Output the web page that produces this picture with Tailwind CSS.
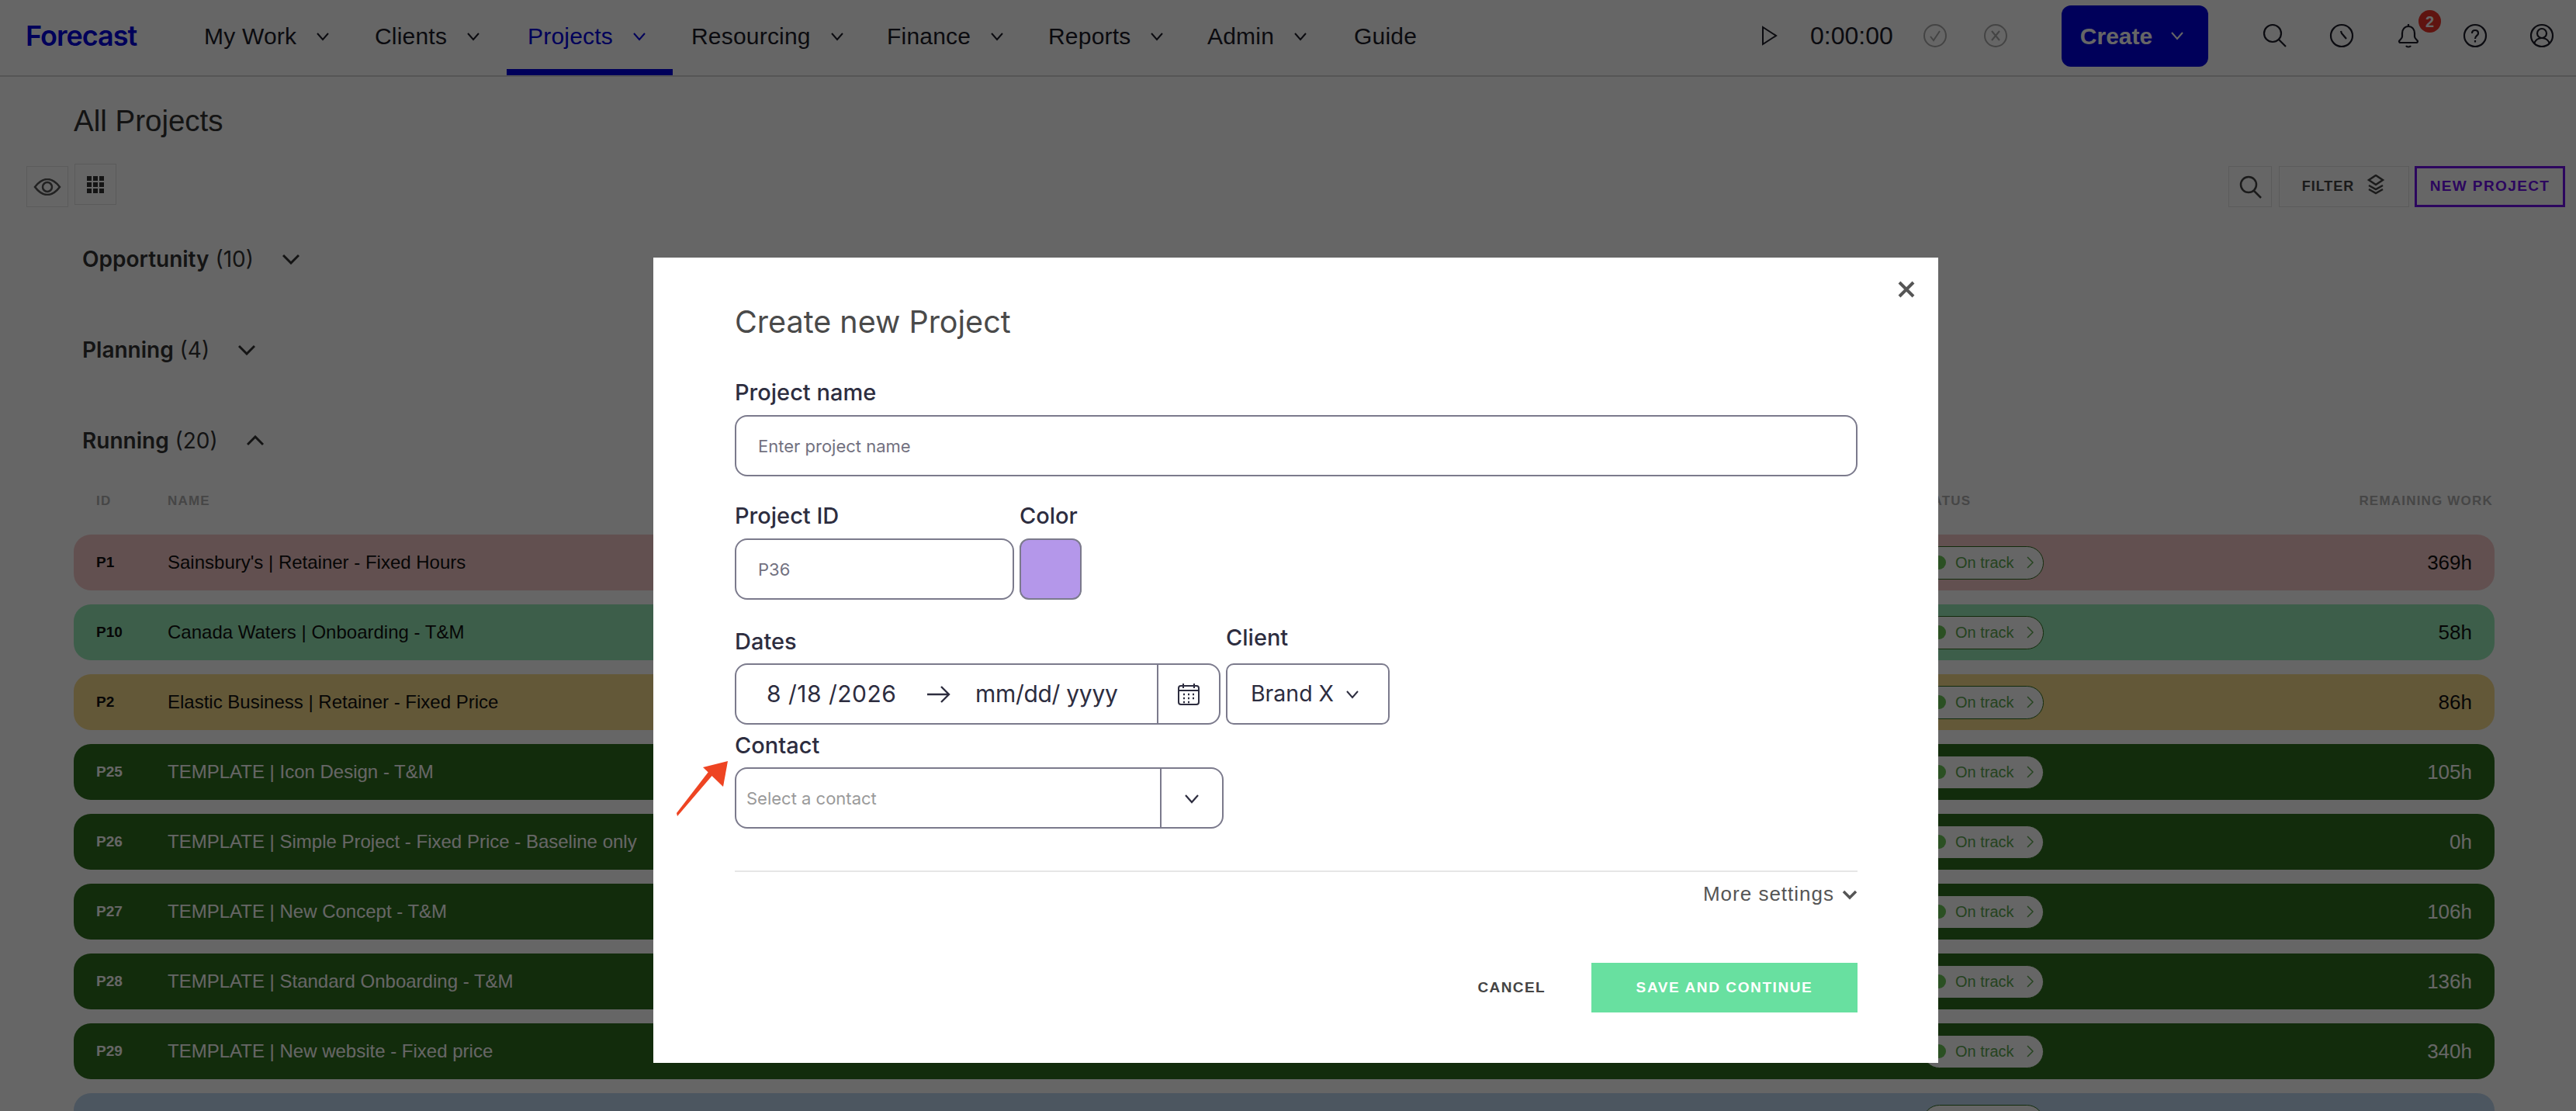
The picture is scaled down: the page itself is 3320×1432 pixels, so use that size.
<!DOCTYPE html>
<html lang="en">
<head>
    <meta charset="UTF-8">
    <title>All Projects</title>
    <script src="https://cdn.jsdelivr.net/npm/@tailwindcss/browser@4"></script>
</head>
<body class="h-[1432px] w-[3320px] overflow-hidden bg-white font-['Liberation_Sans',sans-serif] text-[#111]">
    <!-- page under the dialog -->
    <header class="flex h-[99px] items-center border-b-2 border-[#d8d8d8] pl-[33px] pr-[28px]">
        <span class="mb-[5px] w-[230px] font-['Inter',sans-serif] text-[36px] font-semibold tracking-[-1px] text-[#0000e0]">Forecast</span>
        <nav class="flex h-full items-center text-[30px] tracking-[0.2px] text-[#1c1c28]">
            <a class="flex h-full w-[220px] items-center gap-[24px] pb-[4px]">My Work <svg class="size-[20px]" viewBox="0 0 20 20" fill="none" stroke="currentColor" stroke-width="2"><path d="M3 6l7 8 7-8"/></svg></a>
            <a class="flex h-full w-[197px] items-center gap-[24px] pb-[4px]">Clients <svg class="size-[20px]" viewBox="0 0 20 20" fill="none" stroke="currentColor" stroke-width="2"><path d="M3 6l7 8 7-8"/></svg></a>
            <a class="relative -ml-[27px] flex h-full w-[238px] items-center gap-[24px] pb-[4px] pl-[27px] text-[#0000e0]">Projects <svg class="size-[20px]" viewBox="0 0 20 20" fill="none" stroke="currentColor" stroke-width="2"><path d="M3 6l7 8 7-8"/></svg><span class="absolute bottom-0 left-0 h-[8px] w-[214px] bg-[#0000e0]"></span></a>
            <a class="flex h-full w-[252px] items-center gap-[24px] pb-[4px]">Resourcing <svg class="size-[20px]" viewBox="0 0 20 20" fill="none" stroke="currentColor" stroke-width="2"><path d="M3 6l7 8 7-8"/></svg></a>
            <a class="flex h-full w-[208px] items-center gap-[24px] pb-[4px]">Finance <svg class="size-[20px]" viewBox="0 0 20 20" fill="none" stroke="currentColor" stroke-width="2"><path d="M3 6l7 8 7-8"/></svg></a>
            <a class="flex h-full w-[205px] items-center gap-[24px] pb-[4px]">Reports <svg class="size-[20px]" viewBox="0 0 20 20" fill="none" stroke="currentColor" stroke-width="2"><path d="M3 6l7 8 7-8"/></svg></a>
            <a class="flex h-full w-[189px] items-center gap-[24px] pb-[4px]">Admin <svg class="size-[20px]" viewBox="0 0 20 20" fill="none" stroke="currentColor" stroke-width="2"><path d="M3 6l7 8 7-8"/></svg></a>
            <a class="flex h-full items-center pb-[4px]">Guide</a>
        </nav>
        <div class="mb-[5px] ml-auto flex items-center text-[#1c1c28]">
            <svg class="size-[28px]" viewBox="0 0 28 28" fill="none" stroke="currentColor" stroke-width="2"><path d="M6 3l17 11L6 25z"/></svg>
            <span class="ml-[39px] w-[145px] text-[32px]">0:00:00</span>
            <svg class="size-[32px] text-[#aaa]" viewBox="0 0 32 32" fill="none" stroke="currentColor" stroke-width="2"><circle cx="16" cy="16" r="14"/><path d="M10 17l4 5 8-12"/></svg>
            <svg class="ml-[46px] size-[32px] text-[#aaa]" viewBox="0 0 32 32" fill="none" stroke="currentColor" stroke-width="2"><circle cx="16" cy="16" r="14"/><path d="M11 10l10 12M21 10L11 22"/></svg>
            <button class="ml-[69px] flex h-[79px] w-[189px] items-center justify-center gap-[22px] rounded-[12px] bg-[#0000e0] pr-[6px] text-[30px] font-semibold text-white">Create <svg class="size-[20px]" viewBox="0 0 20 20" fill="none" stroke="currentColor" stroke-width="2"><path d="M3 6l7 8 7-8"/></svg></button>
            <svg class="ml-[70px] size-[32px]" viewBox="0 0 32 32" fill="none" stroke="currentColor" stroke-width="2.2"><circle cx="13" cy="13" r="11"/><path d="M21 21l9 9"/></svg>
            <svg class="ml-[54px] size-[32px]" viewBox="0 0 32 32" fill="none" stroke="currentColor" stroke-width="2.2"><circle cx="16" cy="16" r="14"/><path d="M15 10l1 3 6 7"/></svg>
            <div class="relative ml-[54px] size-[32px]">
                <svg class="size-[32px]" viewBox="0 0 32 32" fill="none" stroke="currentColor" stroke-width="2.2"><path d="M16 1v3M16 4c-5 0-8 4-8 9v4c0 3-3 4-4 6 0 2 1 2 2 2h20c1 0 2 0 2-2-1-2-4-3-4-6v-4c0-5-3-9-8-9zM13 29c1 2 5 2 6 0"/></svg>
                <span class="absolute -top-[17px] left-[29px] flex size-[29px] items-center justify-center rounded-full bg-[#ed3428] text-[20px] font-bold text-white">2</span>
            </div>
            <svg class="ml-[54px] size-[32px]" viewBox="0 0 32 32" fill="none" stroke="currentColor" stroke-width="2.2"><circle cx="16" cy="16" r="14"/><path d="M12 13c0-3 2-4 4-4s4 1 4 4c0 3-4 3-4 7M16 22v2.500"/></svg>
            <svg class="ml-[54px] size-[32px]" viewBox="0 0 32 32" fill="none" stroke="currentColor" stroke-width="2.2"><circle cx="16" cy="16" r="14"/><circle cx="16" cy="13" r="6"/><path d="M6 26c2-5 6-7 10-7s8 2 10 7"/></svg>
        </div>
    </header>

    <main>
        <h1 class="mt-[35px] pl-[95px] text-[38.5px] leading-[44px] text-[#333]">All Projects</h1>
        <div class="mt-[33px] flex items-start px-[34px] pr-[14px]">
            <button class="mt-[3px] flex h-[53px] w-[54px] items-center justify-center border border-[#e4e4e4] text-[#555]">
                <svg class="h-[22px] w-[36px]" viewBox="0 0 36 22" fill="none" stroke="currentColor" stroke-width="2.5"><path d="M2 11C8 3 13 1 18 1s10 2 16 10c-6 8-11 10-16 10S8 19 2 11z"/><ellipse cx="18" cy="11" rx="6" ry="6"/></svg>
            </button>
            <button class="ml-[8px] flex h-[53px] w-[54px] items-center justify-center border border-[#e4e4e4] text-[#333]">
                <svg class="size-[22px]" viewBox="0 0 22 22" fill="currentColor"><path d="M0 0h6v6H0zM8 0h6v6H8zM16 0h6v6h-6zM0 8h6v6H0zM8 8h6v6H8zM16 8h6v6h-6zM0 16h6v6H0zM8 16h6v6H8zM16 16h6v6h-6z"/></svg>
            </button>
            <button class="ml-auto mt-[3px] flex h-[53px] w-[56px] items-center justify-center border border-[#e4e4e4] text-[#444]">
                <svg class="size-[32px]" viewBox="0 0 32 32" fill="none" stroke="currentColor" stroke-width="2.5"><circle cx="14" cy="13" r="10"/><path d="M21 21l9 9"/></svg>
            </button>
            <button class="ml-[9px] mt-[3px] flex h-[53px] w-[168px] items-center justify-center gap-[15px] border border-[#e4e4e4] text-[18px] font-bold tracking-[1px] text-[#444]">FILTER
                <svg class="mb-[6px] size-[26px]" viewBox="0 0 26 26" fill="none" stroke="currentColor" stroke-width="2.5"><path d="M13 1l9 6-9 6-9-6zM4 14l9 5 9-5M4 19l9 5 9-5"/></svg>
            </button>
            <button class="ml-[7px] mt-[3px] h-[53px] w-[194px] border-[3px] border-[#6e0fea] text-[19px] font-bold tracking-[1.4px] text-[#6e0fea]">NEW PROJECT</button>
        </div>

        <section class="pl-[106px] font-['Inter',sans-serif] text-[28px] text-[#333]">
            <div class="mt-[47px] flex h-[40px] items-center gap-[37px]"><span><b class="font-semibold">Opportunity</b> (10)</span><svg class="h-[14px] w-[22px]" viewBox="0 0 22 14" fill="none" stroke="currentColor" stroke-width="3"><path d="M1 2l10 10L21 2"/></svg></div>
            <div class="mt-[77px] flex h-[40px] items-center gap-[37px]"><span><b class="font-semibold">Planning</b> (4)</span><svg class="h-[14px] w-[22px]" viewBox="0 0 22 14" fill="none" stroke="currentColor" stroke-width="3"><path d="M1 2l10 10L21 2"/></svg></div>
            <div class="mt-[77px] flex h-[40px] items-center gap-[37px]"><span><b class="font-semibold">Running</b> (20)</span><svg class="h-[14px] w-[22px]" viewBox="0 0 22 14" fill="none" stroke="currentColor" stroke-width="3"><path d="M1 12L11 2l10 10"/></svg></div>
        </section>

        <div class="mt-[48px] flex h-[20px] items-center pl-[124px] pr-[107px] text-[17px] font-bold tracking-[1.2px] text-[#b0b0b0]">
            <span class="w-[92px]">ID</span><span>NAME</span><span class="ml-auto">STATUS</span><span class="ml-[500px]">REMAINING WORK</span>
        </div>

        <div class="mx-[95px] mt-[33px] flex w-[3120px] flex-col gap-[18px] text-[24px]">
            <div class="flex h-[72px] items-center rounded-[22px] bg-[#f5c8c8] pl-[29px] pr-[29px]"><b class="w-[92px] text-[19px]">P1</b><span class="flex-1">Sainsbury's | Retainer - Fixed Hours</span><span class="flex h-[43px] w-[156px] items-center rounded-full border border-[#2f6e1e] bg-white pl-[11px] text-[20px] text-[#5ea84f]"><i class="mr-[12px] size-[18px] rounded-full bg-[#6cc858]"></i>On track<svg class="ml-auto mr-[12px] h-[16px] w-[10px]" viewBox="0 0 10 16" fill="none" stroke="currentColor" stroke-width="1.5"><path d="M2 1l7 7-7 7"/></svg></span><span class="w-[552px] text-right text-[26px]">369h</span></div>
            <div class="flex h-[72px] items-center rounded-[22px] bg-[#99ebb9] pl-[29px] pr-[29px]"><b class="w-[92px] text-[19px]">P10</b><span class="flex-1">Canada Waters | Onboarding - T&amp;M</span><span class="flex h-[43px] w-[156px] items-center rounded-full border border-[#2f6e1e] bg-white pl-[11px] text-[20px] text-[#5ea84f]"><i class="mr-[12px] size-[18px] rounded-full bg-[#6cc858]"></i>On track<svg class="ml-auto mr-[12px] h-[16px] w-[10px]" viewBox="0 0 10 16" fill="none" stroke="currentColor" stroke-width="1.5"><path d="M2 1l7 7-7 7"/></svg></span><span class="w-[552px] text-right text-[26px]">58h</span></div>
            <div class="flex h-[72px] items-center rounded-[22px] bg-[#f8dc8c] pl-[29px] pr-[29px]"><b class="w-[92px] text-[19px]">P2</b><span class="flex-1">Elastic Business | Retainer - Fixed Price</span><span class="flex h-[43px] w-[156px] items-center rounded-full border border-[#2f6e1e] bg-white pl-[11px] text-[20px] text-[#5ea84f]"><i class="mr-[12px] size-[18px] rounded-full bg-[#6cc858]"></i>On track<svg class="ml-auto mr-[12px] h-[16px] w-[10px]" viewBox="0 0 10 16" fill="none" stroke="currentColor" stroke-width="1.5"><path d="M2 1l7 7-7 7"/></svg></span><span class="w-[552px] text-right text-[26px]">86h</span></div>
            <div class="flex h-[72px] items-center rounded-[22px] bg-[#2f6e1e] pl-[29px] pr-[29px] text-white"><b class="w-[92px] text-[19px]">P25</b><span class="flex-1">TEMPLATE | Icon Design - T&amp;M</span><span class="flex h-[43px] w-[156px] items-center rounded-full border border-[#2f6e1e] bg-white pl-[11px] text-[20px] text-[#5ea84f]"><i class="mr-[12px] size-[18px] rounded-full bg-[#6cc858]"></i>On track<svg class="ml-auto mr-[12px] h-[16px] w-[10px]" viewBox="0 0 10 16" fill="none" stroke="currentColor" stroke-width="1.5"><path d="M2 1l7 7-7 7"/></svg></span><span class="w-[552px] text-right text-[26px]">105h</span></div>
            <div class="flex h-[72px] items-center rounded-[22px] bg-[#2f6e1e] pl-[29px] pr-[29px] text-white"><b class="w-[92px] text-[19px]">P26</b><span class="flex-1">TEMPLATE | Simple Project - Fixed Price - Baseline only</span><span class="flex h-[43px] w-[156px] items-center rounded-full border border-[#2f6e1e] bg-white pl-[11px] text-[20px] text-[#5ea84f]"><i class="mr-[12px] size-[18px] rounded-full bg-[#6cc858]"></i>On track<svg class="ml-auto mr-[12px] h-[16px] w-[10px]" viewBox="0 0 10 16" fill="none" stroke="currentColor" stroke-width="1.5"><path d="M2 1l7 7-7 7"/></svg></span><span class="w-[552px] text-right text-[26px]">0h</span></div>
            <div class="flex h-[72px] items-center rounded-[22px] bg-[#2f6e1e] pl-[29px] pr-[29px] text-white"><b class="w-[92px] text-[19px]">P27</b><span class="flex-1">TEMPLATE | New Concept - T&amp;M</span><span class="flex h-[43px] w-[156px] items-center rounded-full border border-[#2f6e1e] bg-white pl-[11px] text-[20px] text-[#5ea84f]"><i class="mr-[12px] size-[18px] rounded-full bg-[#6cc858]"></i>On track<svg class="ml-auto mr-[12px] h-[16px] w-[10px]" viewBox="0 0 10 16" fill="none" stroke="currentColor" stroke-width="1.5"><path d="M2 1l7 7-7 7"/></svg></span><span class="w-[552px] text-right text-[26px]">106h</span></div>
            <div class="flex h-[72px] items-center rounded-[22px] bg-[#2f6e1e] pl-[29px] pr-[29px] text-white"><b class="w-[92px] text-[19px]">P28</b><span class="flex-1">TEMPLATE | Standard Onboarding - T&amp;M</span><span class="flex h-[43px] w-[156px] items-center rounded-full border border-[#2f6e1e] bg-white pl-[11px] text-[20px] text-[#5ea84f]"><i class="mr-[12px] size-[18px] rounded-full bg-[#6cc858]"></i>On track<svg class="ml-auto mr-[12px] h-[16px] w-[10px]" viewBox="0 0 10 16" fill="none" stroke="currentColor" stroke-width="1.5"><path d="M2 1l7 7-7 7"/></svg></span><span class="w-[552px] text-right text-[26px]">136h</span></div>
            <div class="flex h-[72px] items-center rounded-[22px] bg-[#2f6e1e] pl-[29px] pr-[29px] text-white"><b class="w-[92px] text-[19px]">P29</b><span class="flex-1">TEMPLATE | New website - Fixed price</span><span class="flex h-[43px] w-[156px] items-center rounded-full border border-[#2f6e1e] bg-white pl-[11px] text-[20px] text-[#5ea84f]"><i class="mr-[12px] size-[18px] rounded-full bg-[#6cc858]"></i>On track<svg class="ml-auto mr-[12px] h-[16px] w-[10px]" viewBox="0 0 10 16" fill="none" stroke="currentColor" stroke-width="1.5"><path d="M2 1l7 7-7 7"/></svg></span><span class="w-[552px] text-right text-[26px]">340h</span></div>
            <div class="flex h-[72px] items-center justify-end rounded-[22px] bg-[#bed7f0] pr-[581px]"><span class="h-[43px] w-[156px] rounded-full border border-[#2f6e1e] bg-white"></span></div>
        </div>
    </main>

    <!-- dim layer -->
    <div class="fixed inset-0 bg-black/60"></div>

    <!-- dialog -->
    <div class="fixed left-[842px] top-[332px] h-[1038px] w-[1656px] bg-white pl-[105px] pr-[104px] text-[#2d2d3f]">
        <button class="absolute right-[30px] top-[30px] text-[#555]">
            <svg class="size-[22px]" viewBox="0 0 22 22" fill="none" stroke="currentColor" stroke-width="4"><path d="M2 2l18 18M20 2L2 20"/></svg>
        </button>
        <h2 class="pt-[60px] font-['Inter',sans-serif] text-[39.5px] leading-[46px] text-[#4a4a4a]">Create new Project</h2>

        <label class="mt-[50px] block font-['Inter',sans-serif] text-[29px] font-medium leading-[36px]">Project name</label>
        <div class="mt-[11px] flex h-[79px] items-center rounded-[16px] border-2 border-[#7b7a8c] pl-[28px] pt-[2px] font-['Inter',sans-serif] text-[22px] text-[#72717f]">Enter project name</div>

        <div class="mt-[33px] flex gap-[7px]">
            <div class="w-[360px]">
                <label class="block font-['Inter',sans-serif] text-[29px] font-medium leading-[36px]">Project ID</label>
                <div class="mt-[11px] flex h-[79px] items-center rounded-[16px] border-2 border-[#7b7a8c] pl-[28px] pt-[2px] font-['Inter',sans-serif] text-[22px] text-[#72717f]">P36</div>
            </div>
            <div>
                <label class="block font-['Inter',sans-serif] text-[29px] font-medium leading-[36px]">Color</label>
                <div class="mt-[11px] h-[79px] w-[80px] rounded-[12px] border-2 border-[#7b7a8c] bg-[#b497ea]"></div>
            </div>
        </div>

        <div class="mt-[31px] flex items-end gap-[7px]">
            <div>
                <label class="block font-['Inter',sans-serif] text-[29px] font-medium leading-[36px]">Dates</label>
                <div class="mt-[10px] flex h-[79px] w-[626px] items-center rounded-[16px] border-2 border-[#7b7a8c] font-['Inter',sans-serif] text-[30px]">
                    <span class="ml-[39px] w-[172px] whitespace-nowrap tracking-[0.5px]">8 /18 /2026</span>
                    <svg class="ml-[35px] h-[24px] w-[30px]" viewBox="0 0 30 24" fill="none" stroke="currentColor" stroke-width="2.4"><path d="M0 12h28M18 2l10 10-10 10"/></svg>
                    <span class="ml-[32px] w-[182px] whitespace-nowrap tracking-[-0.3px]">mm/dd/ yyyy</span>
                    <span class="ml-auto flex h-full w-[80px] items-center justify-center border-l-2 border-[#7b7a8c]">
                        <svg class="size-[30px]" viewBox="0 0 30 30" fill="none" stroke="currentColor" stroke-width="2"><rect x="2" y="4" width="26" height="24" rx="3"/><path d="M2 10h26M8 1v6M22 1v6"/><path d="M8 15h2M14 15h2M20 15h2M8 20h2M14 20h2M20 20h2M8 25h2M14 25h2" stroke-width="2.4"/></svg>
                    </span>
                </div>
            </div>
            <div>
                <label class="block font-['Inter',sans-serif] text-[29px] font-medium leading-[36px]">Client</label>
                <div class="mt-[15px] flex h-[79px] w-[211px] items-center justify-center gap-[14px] rounded-[10px] border-2 border-[#7b7a8c] pr-[6px] font-['Inter',sans-serif] text-[28.5px]">Brand X
                    <svg class="size-[20px]" viewBox="0 0 20 20" fill="none" stroke="currentColor" stroke-width="2"><path d="M3 6l7 8 7-8"/></svg>
                </div>
            </div>
        </div>

        <label class="mt-[9px] block font-['Inter',sans-serif] text-[29px] font-medium leading-[36px]">Contact</label>
        <div class="relative mt-[10px] flex h-[79px] w-[630px] items-center rounded-[16px] border-2 border-[#7b7a8c]">
            <span class="pl-[13px] pt-[2px] font-['Inter',sans-serif] text-[22px] text-[#9a9a9a]">Select a contact</span>
            <span class="ml-auto flex h-full w-[80px] items-center justify-center border-l-2 border-[#7b7a8c]">
                <svg class="size-[20px]" viewBox="0 0 20 20" fill="none" stroke="currentColor" stroke-width="2.2"><path d="M2 6l8 9 8-9"/></svg>
            </span>
            <svg class="absolute -left-[79px] -top-[11px] h-[72px] w-[72px]" viewBox="0 0 72 72"><path d="M2 68l1 4 48-56-5-5z" fill="#ee4422"/><path d="M68 1L36 9l26 25z" fill="#ee4422"/></svg>
        </div>

        <div class="mt-[54px] h-[2px] bg-[#e6e6e6]"></div>
        <div class="mt-[9px] flex items-center justify-end gap-[10px] font-['Liberation_Sans',sans-serif] text-[26px] tracking-[1px] text-[#555]">More settings
            <svg class="size-[20px]" viewBox="0 0 20 20" fill="none" stroke="currentColor" stroke-width="3.5"><path d="M2 6l8 8 8-8"/></svg>
        </div>
        <div class="mt-[69px] flex items-center justify-end">
            <button class="text-[19px] font-bold tracking-[1.4px] text-[#444]">CANCEL</button>
            <button class="ml-[59px] h-[64px] w-[343px] bg-[#68e0a0] text-[19px] font-bold tracking-[1.6px] text-white">SAVE AND CONTINUE</button>
        </div>
    </div>
</body>
</html>
